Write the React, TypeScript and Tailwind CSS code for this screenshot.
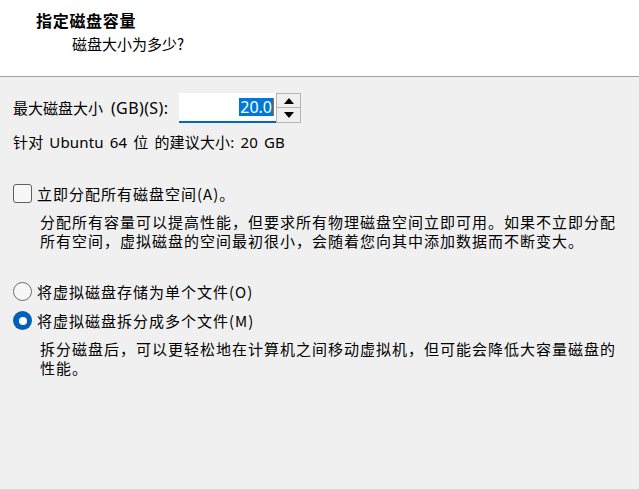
import React, { useState } from "react";

const FONT = '"Noto Sans CJK SC", "Noto Sans", sans-serif';
const LATIN_FIRST = '"Noto Sans", "Noto Sans CJK SC", sans-serif';

function Checkbox() {
  return <div className="w-[19px] h-[19px] shrink-0 rounded-[3px] border border-[#5f5f5f] bg-[#f7f7f7]" />;
}

function Radio({ checked }: { checked?: boolean }) {
  if (checked) {
    return (
      <div className="w-[19px] h-[19px] shrink-0 rounded-full bg-[#005fb8] flex items-center justify-center">
        <div className="w-[8px] h-[8px] rounded-full bg-white" />
      </div>
    );
  }
  return <div className="w-[19px] h-[19px] shrink-0 rounded-full border border-[#6e6e6e] bg-[#f7f7f7]" />;
}

export default function App() {
  const [split] = useState(true);

  return (
    <div className="w-[639px] h-[489px] bg-[#f0f0f0] text-black overflow-hidden" style={{ fontFamily: FONT }}>
      {/* Header */}
      <div className="h-[77px] bg-white border-b border-[#a0a0a0]">
        <div className="pl-[36px] pt-[9px] text-[16px] leading-[22px] font-bold tracking-[0.7px]">指定磁盘容量</div>
        <div className="pl-[72px] mt-[3px] text-[15px] leading-[20px]">磁盘大小为多少?</div>
      </div>

      {/* Body */}
      <div className="px-[13px]">
        <div className="mt-[16px] flex items-center h-[30px]">
          <div className="w-[166px] text-[15px] leading-[20px] [word-spacing:4px]" style={{ fontFamily: LATIN_FIRST }}>
            最大磁盘大小 <span className="text-[16px] tracking-[0.4px]">(GB)(S):</span>
          </div>
          <div className="w-[97px] h-[30px] bg-white border-b-2 border-[#0067c0] flex items-center justify-end pr-[2px]">
            <span
              className="bg-[#0078d7] text-white text-[16px] leading-[18px] px-[1px]"
              style={{ fontFamily: '"Noto Sans", "Liberation Sans", sans-serif' }}
            >
              20.0
            </span>
            <span className="w-[1px] h-[18px] bg-[#b06a1c]" />
          </div>
          <div className="flex flex-col h-[30px] w-[25px]">
            <div className="h-[15px] border border-[#b4b4b4] bg-[#f0f0f0] flex items-center justify-center">
              <svg width="10" height="6" viewBox="0 0 10 6"><path d="M5 0 L10 6 L0 6 Z" fill="#000" /></svg>
            </div>
            <div className="h-[15px] border border-t-0 border-[#b4b4b4] bg-[#f0f0f0] flex items-center justify-center">
              <svg width="10" height="6" viewBox="0 0 10 6"><path d="M0 0 L10 0 L5 6 Z" fill="#000" /></svg>
            </div>
          </div>
        </div>

        <div
          className="mt-[9px] text-[15px] leading-[20px] [word-spacing:2px] tracking-[0.15px]"
          style={{ fontFamily: LATIN_FIRST }}
        >
          针对 Ubuntu 64 位 的建议大小: 20 GB
        </div>

        <div className="mt-[32px] flex items-center gap-[5px] h-[19px]">
          <Checkbox />
          <span className="text-[15px] tracking-[1px] leading-[19px]">立即分配所有磁盘空间(A)。</span>
        </div>

        <p className="mt-[9px] ml-[27px] text-[15px] tracking-[1px] leading-[19px]">
          分配所有容量可以提高性能，但要求所有物理磁盘空间立即可用。如果不立即分配
          <br />
          所有空间，虚拟磁盘的空间最初很小，会随着您向其中添加数据而不断变大。
        </p>

        <div className="mt-[32px] flex items-center gap-[5px] h-[19px]">
          <Radio checked={!split} />
          <span className="text-[15px] tracking-[1px] leading-[19px]">将虚拟磁盘存储为单个文件(O)</span>
        </div>

        <div className="mt-[10px] flex items-center gap-[5px] h-[19px]">
          <Radio checked={split} />
          <span className="text-[15px] tracking-[1px] leading-[19px]">将虚拟磁盘拆分成多个文件(M)</span>
        </div>

        <p className="mt-[9px] ml-[27px] text-[15px] tracking-[1px] leading-[19px]">
          拆分磁盘后，可以更轻松地在计算机之间移动虚拟机，但可能会降低大容量磁盘的
          <br />
          性能。
        </p>
      </div>
    </div>
  );
}
